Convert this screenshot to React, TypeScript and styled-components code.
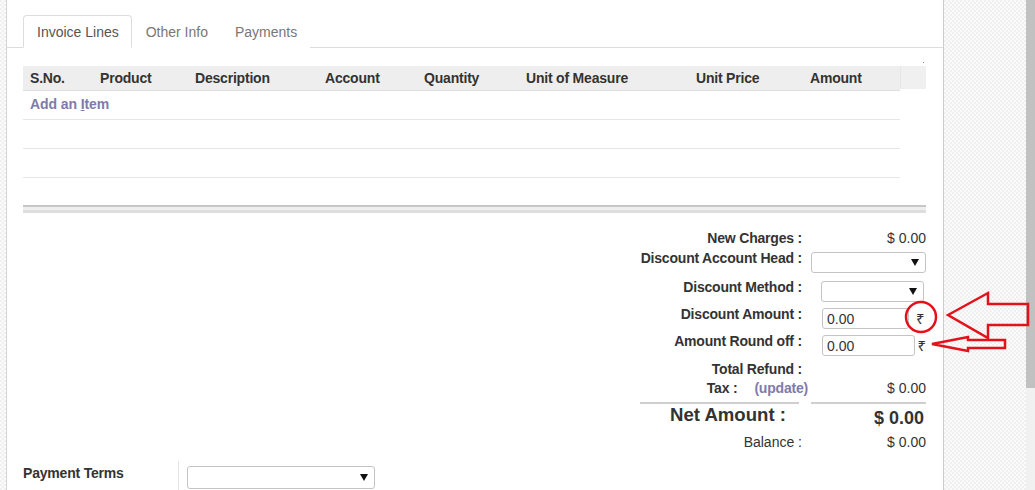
import styled, { createGlobalStyle } from "styled-components";

const GlobalStyle = createGlobalStyle`
  html, body {
    margin: 0;
    padding: 0;
    background: #ffffff;
  }
  * {
    box-sizing: border-box;
  }
`;

const checker = `
  background-color: #f7f7f7;
  background-image: conic-gradient(#fafafa 25%, #f0f0f0 0 50%, #fafafa 0 75%, #f0f0f0 0);
  background-size: 4px 4px;
`;

const Page = styled.div`
  position: relative;
  width: 1035px;
  height: 490px;
  overflow: hidden;
  display: flex;
  font-family: "Liberation Sans", Arial, sans-serif;
  font-size: 14px;
  color: #333333;
`;

const SideStrip = styled.div`
  width: 7px;
  flex-shrink: 0;
  ${checker}
  border-right: 1px solid #d4d4d4;
`;

const Sheet = styled.div`
  width: 937px;
  flex-shrink: 0;
  background: #ffffff;
  border-right: 1px solid #cccccc;
  padding: 15px 17px 0 16px;
`;

const Backdrop = styled.div`
  flex: 1;
  ${checker}
`;

const Scrollbar = styled.div`
  width: 9px;
  flex-shrink: 0;
  display: flex;
  flex-direction: column;
  background: #f1f1f1;
`;

const Thumb = styled.div`
  height: 388px;
  background: #c1c1c1;
`;

const TabBar = styled.div`
  display: flex;
  margin: 0 -17px 0 -16px;
  padding-left: 16px;
  border-bottom: 1px solid #dddddd;
  height: 33px;
`;

const Tab = styled.div<{ $active?: boolean }>`
  height: 33px;
  padding: 6px 12px 5px 13px;
  line-height: 20px;
  border: 1px solid ${(p) => (p.$active ? "#dddddd" : "transparent")};
  border-bottom-color: ${(p) => (p.$active ? "#ffffff" : "transparent")};
  border-radius: 4px 4px 0 0;
  background: #ffffff;
  color: ${(p) => (p.$active ? "#555555" : "#777777")};
`;

const cols = "70px 95px 130px 99px 102px 170px 114px 97px";

const HeadWrap = styled.div`
  display: flex;
  margin-top: 18px;
`;

const HeadRow = styled.div`
  display: grid;
  grid-template-columns: ${cols};
  height: 25px;
  background: #eeeeee;
  border-bottom: 1px solid #dddddd;
`;

const HeadCell = styled.div`
  padding-left: 7px;
  line-height: 24px;
  font-weight: bold;
  letter-spacing: -0.2px;
  color: #333333;
  white-space: nowrap;
`;

const HeadFiller = styled.div`
  position: relative;
  width: 26px;
  height: 23px;
  background: #f0f0f0;
  border-left: 1px solid #e6e6e6;

  &::after {
    content: "";
    position: absolute;
    right: 2px;
    top: -4px;
    width: 1px;
    height: 1px;
    background: #888888;
  }
`;

const BodyRow = styled.div<{ $h?: number; $line?: boolean }>`
  width: 877px;
  height: ${(p) => p.$h ?? 29}px;
  border-bottom: ${(p) => (p.$line === false ? "none" : "1px solid #e6e6e6")};
  padding-left: 7px;
  line-height: 26px;
`;

const AddLink = styled.span`
  color: #7c7bad;
  font-weight: bold;
  letter-spacing: -0.1px;
`;

const TableFoot = styled.div`
  width: 903px;
  height: 8px;
  border-top: 2px solid #c6c6c6;
  border-bottom: 3px solid #dedede;
  background: #eeeeee;
`;

const Summary = styled.div`
  width: 286px;
  margin: 16px 0 0 617px;
  display: flex;
  flex-direction: column;
`;

const SumRow = styled.div<{ $h: number }>`
  display: grid;
  grid-template-columns: 162px 115px;
  column-gap: 9px;
  height: ${(p) => p.$h}px;
  align-items: start;
`;

const Label = styled.div<{ $top?: number; $plain?: boolean }>`
  display: flex;
  justify-content: flex-end;
  padding-top: ${(p) => p.$top ?? 0}px;
  line-height: 18px;
  font-weight: ${(p) => (p.$plain ? "normal" : "bold")};
  letter-spacing: ${(p) => (p.$plain ? "0" : "-0.2px")};
  white-space: nowrap;
`;

const Value = styled.div<{ $top?: number }>`
  display: flex;
  justify-content: flex-end;
  align-items: center;
  padding-top: ${(p) => p.$top ?? 0}px;
  line-height: 18px;
`;

const Field = styled.div`
  display: flex;
  align-items: flex-start;
`;

const SelectBox = styled.div<{ $w: number; $ml?: number; $mt?: number; $h?: number }>`
  width: ${(p) => p.$w}px;
  height: ${(p) => p.$h ?? 21}px;
  margin-left: ${(p) => p.$ml ?? 0}px;
  margin-top: ${(p) => p.$mt ?? 0}px;
  border: 1px solid #c4c4c4;
  border-radius: 3px;
  background: #ffffff;
  display: flex;
  align-items: center;
  justify-content: flex-end;
  padding-right: 6px;

  &::after {
    content: "";
    border-left: 4px solid transparent;
    border-right: 4px solid transparent;
    border-top: 7px solid #111111;
  }
`;

const InputBox = styled.div<{ $w: number }>`
  width: ${(p) => p.$w}px;
  height: 21px;
  margin: 3px 0 0 11px;
  border: 1px solid #c4c4c4;
  border-radius: 3px;
  padding-left: 4px;
  line-height: 20px;
  font-size: 14px;
  color: #333333;
`;

const Rupee = styled.span<{ $ml: number }>`
  margin: 3px 0 0 ${(p) => p.$ml}px;
  font-family: "Noto Sans", "DejaVu Sans", sans-serif;
  font-size: 15px;
  line-height: 20px;
  color: #333333;
`;

const UpdateLink = styled.span`
  margin: 0 -6px 0 17px;
  color: #7c7bad;
`;

const RuleRow = styled.div`
  display: grid;
  grid-template-columns: 159px 115px;
  column-gap: 12px;
  margin-top: 3px;
`;

const Rule = styled.div`
  height: 2px;
  background: #cfcfcf;
`;

const NetLabel = styled.div`
  text-align: right;
  padding-right: 16px;
  font-size: 18.6px;
  line-height: 22px;
  font-weight: bold;
  white-space: nowrap;
`;

const NetValue = styled.div`
  text-align: right;
  padding: 3px 2px 0 0;
  font-size: 18px;
  line-height: 22px;
  font-weight: bold;
`;

const TermsRow = styled.div`
  display: flex;
  margin-top: 11px;
  height: 29px;
`;

const TermsLabel = styled.div`
  width: 156px;
  padding-top: 3px;
  line-height: 18px;
  font-weight: bold;
  letter-spacing: -0.2px;
  border-right: 1px solid #e4e4e4;
`;

const Marks = styled.svg`
  position: absolute;
  left: 0;
  top: 0;
  pointer-events: none;
`;

const columns = [
  "S.No.",
  "Product",
  "Description",
  "Account",
  "Quantity",
  "Unit of Measure",
  "Unit Price",
  "Amount",
];

export default function App() {
  return (
    <>
      <GlobalStyle />
      <Page>
        <SideStrip />
        <Sheet>
          <TabBar>
            <Tab $active>Invoice Lines</Tab>
            <Tab>Other Info</Tab>
            <Tab>Payments</Tab>
          </TabBar>

          <HeadWrap>
            <HeadRow>
              {columns.map((c) => (
                <HeadCell key={c}>{c}</HeadCell>
              ))}
            </HeadRow>
            <HeadFiller />
          </HeadWrap>
          <BodyRow>
            <AddLink>
              Add an <u>I</u>tem
            </AddLink>
          </BodyRow>
          <BodyRow />
          <BodyRow />
          <BodyRow $h={27} $line={false} />
          <TableFoot />

          <Summary>
            <SumRow $h={20}>
              <Label>New Charges :</Label>
              <Value>$ 0.00</Value>
            </SumRow>
            <SumRow $h={28}>
              <Label>Discount Account Head :</Label>
              <SelectBox $w={115} $mt={3} />
            </SumRow>
            <SumRow $h={28}>
              <Label $top={1}>Discount Method :</Label>
              <SelectBox $w={103} $ml={10} $mt={4} />
            </SumRow>
            <SumRow $h={27}>
              <Label>Discount Amount :</Label>
              <Field>
                <InputBox $w={87}>0.00</InputBox>
                <Rupee $ml={7}>₹</Rupee>
              </Field>
            </SumRow>
            <SumRow $h={27}>
              <Label>Amount Round off :</Label>
              <Field>
                <InputBox $w={94}>0.00</InputBox>
                <Rupee $ml={2}>₹</Rupee>
              </Field>
            </SumRow>
            <SumRow $h={20}>
              <Label $top={1}>Total Refund :</Label>
              <Value />
            </SumRow>
            <SumRow $h={20}>
              <Label>
                Tax :<UpdateLink>(update)</UpdateLink>
              </Label>
              <Value>$ 0.00</Value>
            </SumRow>
            <RuleRow>
              <Rule />
              <Rule />
            </RuleRow>
            <SumRow $h={26}>
              <NetLabel>Net Amount :</NetLabel>
              <NetValue>$ 0.00</NetValue>
            </SumRow>
            <SumRow $h={20}>
              <Label $top={3} $plain>
                Balance :
              </Label>
              <Value $top={3}>$ 0.00</Value>
            </SumRow>
          </Summary>

          <TermsRow>
            <TermsLabel>Payment Terms</TermsLabel>
            <SelectBox $w={188} $h={23} $ml={8} $mt={5} />
          </TermsRow>
        </Sheet>
        <Backdrop />
        <Scrollbar>
          <Thumb />
        </Scrollbar>

        <Marks width="1035" height="490" viewBox="0 0 1035 490">
          <circle cx="921" cy="317" r="15" fill="none" stroke="#e3121a" strokeWidth="2.5" />
          <polygon
            points="948,315 988,293 988,304 1028,304 1028,325 988,325 988,338"
            fill="none"
            stroke="#e3121a"
            strokeWidth="2.5"
            strokeLinejoin="miter"
          />
          <polygon
            points="932,344 968,337 968,340 1005,340 1005,348 968,348 968,351"
            fill="none"
            stroke="#e3121a"
            strokeWidth="2.5"
          />
        </Marks>
      </Page>
    </>
  );
}
